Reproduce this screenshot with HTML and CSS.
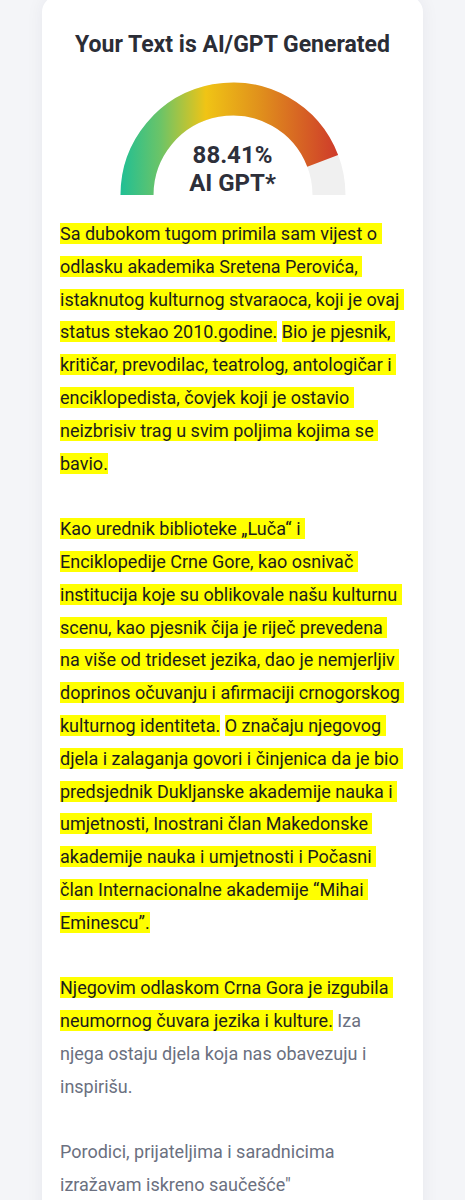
FILE: index.html
```html
<!DOCTYPE html>
<html lang="sr">
<head>
<meta charset="utf-8">
<title>AI/GPT Result</title>
<link rel="stylesheet" href="styles.css">
</head>
<body>
<main class="card">
  <h1 class="title">Your Text is AI/GPT Generated</h1>
  <div class="gauge">
    <svg class="gauge-svg" width="226" height="114" viewBox="0 0 226 114" aria-hidden="true">
      <defs>
        <linearGradient id="g" gradientUnits="userSpaceOnUse" x1="0" y1="0" x2="226" y2="0">
          <stop offset="0" stop-color="#1fbf95"/>
          <stop offset="0.18" stop-color="#6cc467"/>
          <stop offset="0.38" stop-color="#f0c415"/>
          <stop offset="0.62" stop-color="#e0901c"/>
          <stop offset="0.95" stop-color="#cf3e2a"/>
        </linearGradient>
      </defs>
      <path d="M 17 113 A 96 96 0 0 1 209 113" fill="none" stroke="#f0f0f0" stroke-width="33"/>
      <path d="M 17 113 A 96 96 0 0 1 202.7 78.8" fill="none" stroke="url(#g)" stroke-width="33"/>
    </svg>
    <div class="gauge-label">88.41%<br>AI GPT*</div>
  </div>
  <div class="text">
    <p><span class="hl">Sa dubokom tugom primila sam vijest o odlasku akademika Sretena Perovića, istaknutog kulturnog stvaraoca, koji je ovaj status stekao 2010.godine.</span> <span class="hl">Bio je pjesnik, kritičar, prevodilac, teatrolog, antologičar i enciklopedista, čovjek koji je ostavio neizbrisiv trag u svim poljima kojima se bavio.</span></p>
    <p><span class="hl">Kao urednik biblioteke „Luča“ i Enciklopedije Crne Gore, kao osnivač institucija koje su oblikovale našu kulturnu scenu, kao pjesnik čija je riječ prevedena na više od trideset jezika, dao je nemjerljiv doprinos očuvanju i afirmaciji crnogorskog kulturnog identiteta.</span> <span class="hl">O značaju njegovog djela i zalaganja govori i činjenica da je bio predsjednik Dukljanske akademije nauka i umjetnosti, Inostrani član Makedonske akademije nauka i umjetnosti i Počasni član Internacionalne akademije “Mihai Eminescu”.</span></p>
    <p><span class="hl">Njegovim odlaskom Crna Gora je izgubila neumornog čuvara jezika i kulture.</span> Iza njega ostaju djela koja nas obavezuju i inspirišu.</p>
    <p>Porodici, prijateljima i saradnicima izražavam iskreno saučešće"</p>
  </div>
</main>
</body>
</html>
```
FILE: styles.css
```css
html, body {
  margin: 0;
  padding: 0;
}
body {
  background: #f4f5f8;
  font-family: Roboto, "Noto Sans", "Liberation Sans", sans-serif;
}
.card {
  box-sizing: border-box;
  width: 381px;
  margin: -4px auto 0;
  background: #ffffff;
  border-radius: 16px;
  box-shadow: 0 0 18px rgba(30, 40, 70, 0.06);
  padding: 35px 18px 40px;
}
.title {
  margin: 0;
  text-align: center;
  font-size: 23px;
  line-height: 28px;
  font-weight: 700;
  color: #2b2d36;
}
.gauge {
  display: grid;
  justify-items: center;
  margin-top: 23px;
}
.gauge-svg,
.gauge-label {
  grid-area: 1 / 1;
}
.gauge-svg {
  display: block;
}
.gauge-label {
  align-self: end;
  text-align: center;
  font-size: 24px;
  line-height: 28px;
  font-weight: 700;
  color: #2d2f3a;
  margin-bottom: -1px;
}
.text {
  margin-top: 22px;
  font-size: 18px;
  line-height: 32.8px;
  color: #6b7080;
}
.text p {
  margin: 0 0 32.8px;
  white-space: pre-wrap;
}
.hl {
  background: #ffff00;
  color: #1c1c1c;
}
```
